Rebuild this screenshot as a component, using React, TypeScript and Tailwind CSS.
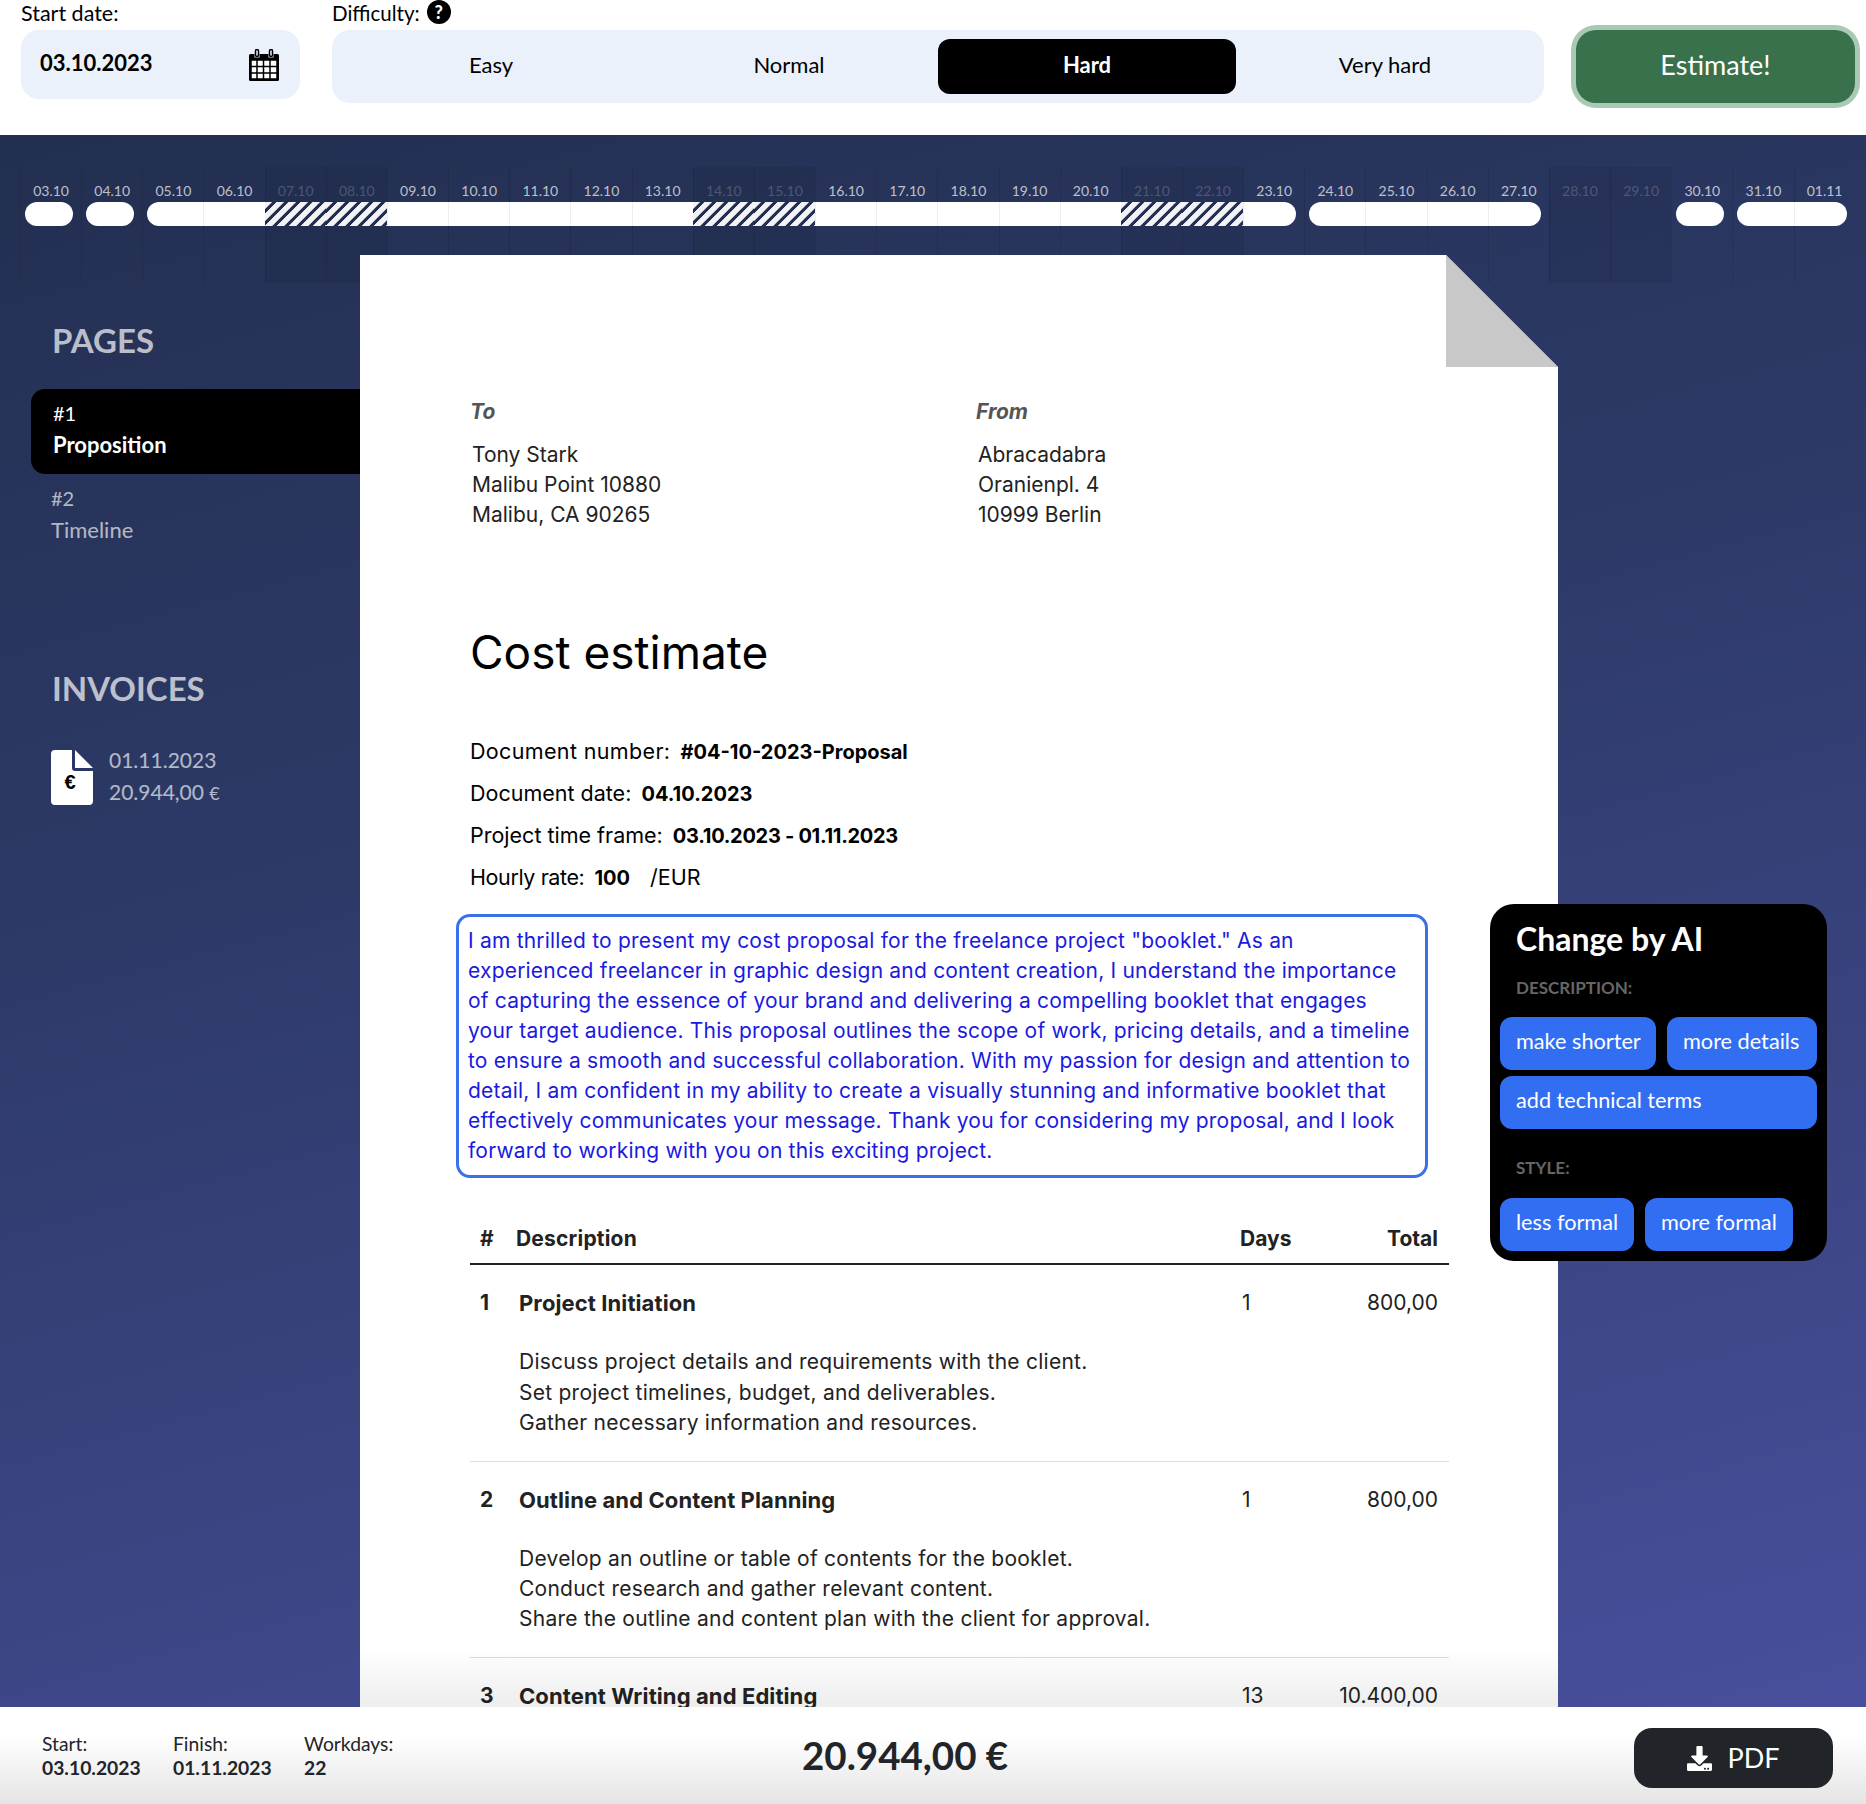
import { FaDownload } from "react-icons/fa";

const AVENIR = "font-['Lato','Noto_Sans',sans-serif]";
const DOC = "font-['Inter','Noto_Sans',sans-serif]";

const DAYS = [
  { label: "03.10", bar: "single" },
  { label: "04.10", bar: "single" },
  { label: "05.10", bar: "start" },
  { label: "06.10", bar: "mid" },
  { label: "07.10", bar: "hatch" },
  { label: "08.10", bar: "hatch" },
  { label: "09.10", bar: "mid" },
  { label: "10.10", bar: "mid" },
  { label: "11.10", bar: "mid" },
  { label: "12.10", bar: "mid" },
  { label: "13.10", bar: "mid" },
  { label: "14.10", bar: "hatch" },
  { label: "15.10", bar: "hatch" },
  { label: "16.10", bar: "mid" },
  { label: "17.10", bar: "mid" },
  { label: "18.10", bar: "mid" },
  { label: "19.10", bar: "mid" },
  { label: "20.10", bar: "mid" },
  { label: "21.10", bar: "hatch" },
  { label: "22.10", bar: "hatch" },
  { label: "23.10", bar: "end" },
  { label: "24.10", bar: "start" },
  { label: "25.10", bar: "mid" },
  { label: "26.10", bar: "mid" },
  { label: "27.10", bar: "end" },
  { label: "28.10", bar: "off" },
  { label: "29.10", bar: "off" },
  { label: "30.10", bar: "single" },
  { label: "31.10", bar: "start" },
  { label: "01.11", bar: "end" },
] as const;

const BAR_CLASS = {
  single: "ml-1 mr-2 rounded-[12px] bg-white",
  start: "ml-1 rounded-l-[12px] bg-white",
  end: "-ml-px mr-2 rounded-r-[12px] border-l border-[#eeeeee] bg-white",
  mid: "-ml-px border-l border-[#eeeeee] bg-white",
  hatch:
    "-ml-px bg-[repeating-linear-gradient(135deg,#f3f3f6_0px,#f3f3f6_4.6px,transparent_5.6px,transparent_7.8px,#f3f3f6_8.5px)]",
  off: "",
};

const INTRO = [
  'I am thrilled to present my cost proposal for the freelance project "booklet." As an',
  "experienced freelancer in graphic design and content creation, I understand the importance",
  "of capturing the essence of your brand and delivering a compelling booklet that engages",
  "your target audience. This proposal outlines the scope of work, pricing details, and a timeline",
  "to ensure a smooth and successful collaboration. With my passion for design and attention to",
  "detail, I am confident in my ability to create a visually stunning and informative booklet that",
  "effectively communicates your message. Thank you for considering my proposal, and I look",
  "forward to working with you on this exciting project.",
];

const ROWS = [
  {
    n: 1,
    title: "Project Initiation",
    days: "1",
    total: "800,00",
    lines: [
      "Discuss project details and requirements with the client.",
      "Set project timelines, budget, and deliverables.",
      "Gather necessary information and resources.",
    ],
  },
  {
    n: 2,
    title: "Outline and Content Planning",
    days: "1",
    total: "800,00",
    lines: [
      "Develop an outline or table of contents for the booklet.",
      "Conduct research and gather relevant content.",
      "Share the outline and content plan with the client for approval.",
    ],
  },
  { n: 3, title: "Content Writing and Editing", days: "13", total: "10.400,00", lines: [] },
];

function CalendarIcon() {
  return (
    <svg viewBox="0 0 30 32" className="h-8 w-[30px]" fill="#000">
      <path d="M1.5 5h4v3.5h5V5h9v3.5h5V5h4A1.5 1.5 0 0 1 30 6.5v24a1.5 1.5 0 0 1-1.5 1.5h-27A1.5 1.5 0 0 1 0 30.500v-24A1.5 1.500 0 0 1 1.500 5z" />
      <rect x="6.500" y="0.500" width="3" height="7" rx="1.500" fill="none" stroke="#000" strokeWidth="1.500" />
      <rect x="20.500" y="0.500" width="3" height="7" rx="1.500" fill="none" stroke="#000" strokeWidth="1.500" />
      <path
        d="M2 11h26v19H2z M8 11v19 M14.500 11v19 M21 11v19 M2 17.500h26 M2 24h26"
        fill="#fff"
        stroke="#000"
        strokeWidth="1.500"
      />
    </svg>
  );
}

function HelpIcon() {
  return (
    <span className="flex h-6 w-6 items-center justify-center rounded-full bg-black text-[18px] font-black leading-none text-white">
      ?
    </span>
  );
}

function InvoiceIcon() {
  return (
    <svg viewBox="0 0 42 55" className="h-[55px] w-[42px] shrink-0">
      <path
        d="M4 0h17v18a3 3 0 0 0 3 3h18v30a4 4 0 0 1-4 4H4a4 4 0 0 1-4-4V4a4 4 0 0 1 4-4z"
        fill="#fff"
      />
      <path d="M24 0l18 18H24z" fill="#fff" />
      <text x="19" y="39" fontSize="20" fontWeight="800" fontFamily="Liberation Sans" textAnchor="middle">
        €
      </text>
    </svg>
  );
}

function Timeline() {
  return (
    <div className="-mb-7 flex h-[116px] pl-[20px]">
      {DAYS.map((d) => {
        const off = d.bar === "hatch" || d.bar === "off";
        return (
          <div
            key={d.label}
            className={`w-[61.16px] shrink-0 border-l border-black/10 ${off ? "bg-black/[0.06]" : ""}`}
          >
            <div
              className={`mt-[15px] h-[20px] text-center text-[14px] leading-[18px] ${AVENIR} ${
                off ? "text-white/20" : "text-white/70"
              }`}
            >
              {d.label}
            </div>
            <div className={`h-6 ${BAR_CLASS[d.bar]}`} />
          </div>
        );
      })}
    </div>
  );
}

function Sidebar() {
  return (
    <aside className={`w-[360px] shrink-0 pt-[66px] text-white ${AVENIR}`}>
      <h2 className="ml-[52px] text-[33px] font-bold leading-[38px] text-white/70">PAGES</h2>
      <div className="ml-[31px] mt-[30px] h-[85px] rounded-l-[14px] bg-black pl-[22px] pt-2 text-[20px] leading-8">
        <div>#1</div>
        <div className="text-[22px] font-bold">Proposition</div>
      </div>
      <div className="ml-[51px] mt-2 text-[20px] leading-8 text-white/65">
        <div>#2</div>
        <div className="text-[22px]">Timeline</div>
      </div>
      <h2 className="ml-[52px] mt-[123px] text-[33px] font-bold leading-[38px] text-white/70">
        INVOICES
      </h2>
      <div className="ml-[51px] mt-[43px] flex gap-4">
        <InvoiceIcon />
        <div className="-mt-[6px] text-[21px] leading-8 text-white/65">
          <div>01.11.2023</div>
          <div>
            20.944,00 <span className="text-[18px]">€</span>
          </div>
        </div>
      </div>
    </aside>
  );
}

function Meta({
  label,
  value,
  extra,
  labelClass = "",
  valueClass = "",
}: {
  label: string;
  value: string;
  extra?: string;
  labelClass?: string;
  valueClass?: string;
}) {
  return (
    <p className="mb-[18px] h-6 text-[21.5px] leading-6 text-black">
      <span className={labelClass}>{label}</span>{" "}
      <b className={`ml-1 text-[20px] font-bold ${valueClass}`}>{value}</b>
      {extra && <span className="ml-5">{extra}</span>}
    </p>
  );
}

function Document() {
  return (
    <main
      className={`relative w-[1198px] shrink-0 bg-white pl-[110px] pt-[145px] text-[#222] ${DOC} [clip-path:polygon(0_0,1086px_0,100%_112px,100%_100%,0_100%)]`}
    >
      <div className="absolute right-0 top-0 h-[112px] w-[112px] bg-[#c8c8c8] [clip-path:polygon(0_0,0_100%,100%_100%)]" />

      <div className="flex text-[21px] leading-[30px]">
        <div className="w-[506px]">
          <div className="text-[21px] font-bold italic leading-6 text-[#555]">To</div>
          <div className="ml-[2px] mt-[16px]">
            Tony Stark
            <br />
            Malibu Point 10880
            <br />
            Malibu, CA 90265
          </div>
        </div>
        <div>
          <div className="text-[21px] font-bold italic leading-6 text-[#555]">From</div>
          <div className="ml-[2px] mt-[16px]">
            Abracadabra
            <br />
            Oranienpl. 4
            <br />
            10999 Berlin
          </div>
        </div>
      </div>

      <h1 className="mt-[95px] text-[46px] font-normal leading-[54px] text-black">Cost estimate</h1>

      <div className="mt-[60px]">
        <Meta label="Document number:" value="#04-10-2023-Proposal" labelClass="tracking-[0.35px]" />
        <Meta label="Document date:" value="04.10.2023" />
        <Meta label="Project time frame:" value="03.10.2023 - 01.11.2023" valueClass="tracking-[-0.3px]" />
        <Meta label="Hourly rate:" value="100" extra="/EUR" labelClass="tracking-[-0.4px]" />
      </div>

      <div className="-ml-[14px] mt-[25px] h-[264px] w-[972px] rounded-[14px] border-[3px] border-[#3a70e8] pl-[9px] pt-[9px] text-[21px] leading-[30px] tracking-[0.2px] text-[#1a1ae0]">
        {INTRO.map((line) => (
          <div key={line} className="whitespace-nowrap">
            {line}
          </div>
        ))}
      </div>

      <div className="mt-[43px] w-[979px] text-[21px]">
        <div className="grid h-[44px] grid-cols-[46px_1fr_70px_139px] items-start border-b-2 border-[#222] font-bold leading-9">
          <div className="pl-[10px]">#</div>
          <div className="tracking-[0.2px]">Description</div>
          <div>Days</div>
          <div className="pr-[11px] text-right">Total</div>
        </div>
        {ROWS.map((row) => (
          <div key={row.n} className="h-[196.5px] border-b border-[#ddd] pt-[23px] leading-[30.3px]">
            <div className="grid grid-cols-[49px_1fr_70px_139px]">
              <div className="pl-[10px] font-bold">{row.n}</div>
              <div className="text-[22px] font-bold tracking-[0.1px]">{row.title}</div>
              <div className="pl-[2px]">{row.days}</div>
              <div className="pr-[11px] text-right">{row.total}</div>
            </div>
            <div className="ml-[49px] mt-[29px] tracking-[0.25px]">
              {row.lines.map((l) => (
                <div key={l}>{l}</div>
              ))}
            </div>
          </div>
        ))}
      </div>

      <div className="absolute inset-x-0 bottom-0 h-[60px] bg-gradient-to-b from-transparent to-black/[0.07]" />
    </main>
  );
}

function AiPanel() {
  const btn =
    "h-[53px] whitespace-nowrap rounded-[12px] bg-[#326ef2] px-4 pb-[4px] text-left text-[21.7px] text-white";
  return (
    <div className={`absolute left-[1490px] top-[904px] z-20 h-[357px] w-[337px] rounded-[24px] bg-black px-[10px] pt-[15px] ${AVENIR}`}>
      <div className="pl-4 text-[32px] font-bold leading-[40px] text-white">Change by AI</div>
      <div className="mt-[18px] pl-4 text-[17px] font-bold leading-[22px] text-[#666]">DESCRIPTION:</div>
      <div className="mt-[18px] flex gap-[11px]">
        <button className={`${btn} w-[156px]`}>make shorter</button>
        <button className={`${btn} w-[150px]`}>more details</button>
      </div>
      <button className={`${btn} mt-[6px] block w-[317px]`}>add technical terms</button>
      <div className="mt-[28px] pl-4 text-[17px] font-bold leading-[22px] text-[#666]">STYLE:</div>
      <div className="mt-[19px] flex gap-[11px]">
        <button className={`${btn} w-[134px]`}>less formal</button>
        <button className={`${btn} w-[148px]`}>more formal</button>
      </div>
    </div>
  );
}

function Stat({ label, value }: { label: string; value: string }) {
  return (
    <div className="w-[131px] text-[19.3px] leading-[24px] text-[#212529]">
      <div>{label}</div>
      <div className="font-bold">{value}</div>
    </div>
  );
}

export default function App() {
  return (
    <div className={`relative flex h-[1804px] w-[1866px] flex-col overflow-hidden bg-white ${AVENIR}`}>
      <header className="relative h-[135px] shrink-0 bg-white text-black">
        <div className="flex pl-[21px]">
          <div className="w-[311px]">
            <div className="h-[30px] text-[21.5px] leading-[26px]">Start date:</div>
            <div className="flex h-[69px] w-[279px] items-center justify-between rounded-[18px] bg-[#eaf1fa] pl-[19px] pr-[21px]">
              <span className="-mt-1 text-[22px] font-bold">03.10.2023</span>
              <CalendarIcon />
            </div>
          </div>
          <div className="w-[1212px]">
            <div className="flex h-[30px] items-start gap-[7px] text-[20.5px] leading-[26px]">
              Difficulty: <HelpIcon />
            </div>
            <div className="flex h-[73px] items-center rounded-[18px] bg-[#eaf1fa] pl-[10px] pr-2 text-[22px] leading-[26px]">
              <div className="-mt-[3px] w-[298px] text-center">Easy</div>
              <div className="-mt-[3px] w-[298px] text-center">Normal</div>
              <div className="flex h-[55px] w-[298px] items-center justify-center rounded-[12px] bg-black pb-[3px] font-bold text-white">
                Hard
              </div>
              <div className="-mt-[3px] w-[298px] text-center">Very hard</div>
            </div>
          </div>
          <button className="ml-[32px] mt-[30px] h-[73px] w-[279px] rounded-[20px] bg-[#38714b] pb-[2px] text-[27px] text-white ring-[5px] ring-[#a9c9b5]">
            Estimate!
          </button>
        </div>
      </header>

      <div className="flex min-h-0 flex-1 flex-col overflow-hidden bg-[linear-gradient(165deg,#232f50_0%,#2d3a68_40%,#484f9c_100%)] pt-8">
        <Timeline />
        <div className="relative z-10 flex min-h-0 flex-1">
          <Sidebar />
          <Document />
        </div>
      </div>

      <AiPanel />

      <footer className="relative flex h-[97px] shrink-0 bg-gradient-to-b from-white from-30% to-[#e4e4e4] pl-[42px] pt-[25px]">
        <Stat label="Start:" value="03.10.2023" />
        <Stat label="Finish:" value="01.11.2023" />
        <Stat label="Workdays:" value="22" />
        <div className="ml-[367px] text-[38.5px] font-bold leading-[46px] text-[#212529]">
          20.944,00 €
        </div>
        <button className="absolute left-[1634px] top-[21px] flex h-[60px] w-[199px] items-center justify-center gap-[15px] rounded-[18px] bg-[#212529] text-[27px] text-white">
          <FaDownload className="h-[25px] w-[25px]" />
          PDF
        </button>
      </footer>
    </div>
  );
}
